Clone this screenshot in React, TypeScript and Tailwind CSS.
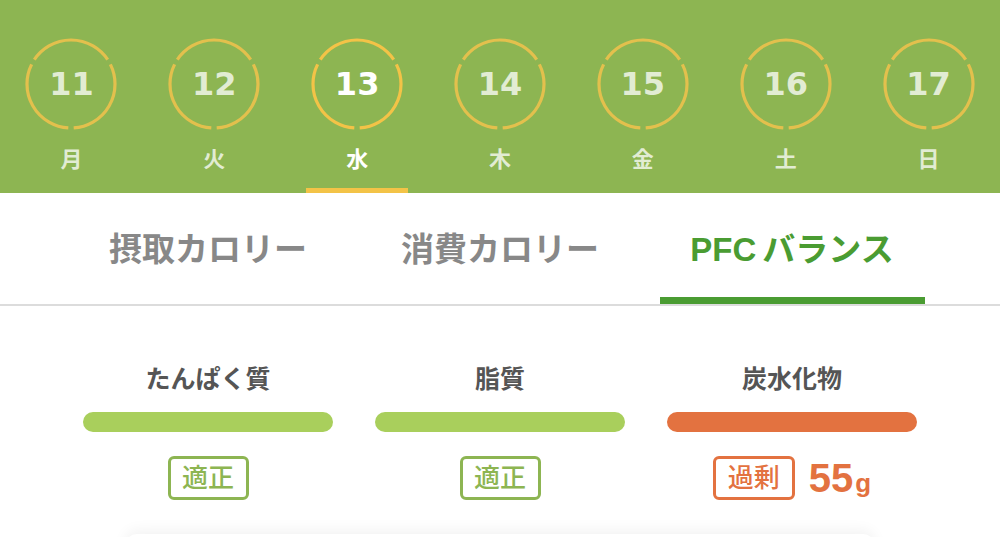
const DAYS = [
  { date: 11, label: "月" },
  { date: 12, label: "火" },
  { date: 13, label: "水", selected: true },
  { date: 14, label: "木" },
  { date: 15, label: "金" },
  { date: 16, label: "土" },
  { date: 17, label: "日" },
];

const TABS = [
  { name: "摂取カロリー" },
  { name: "消費カロリー" },
  { name: "PFCバランス", active: true },
];

const FONT = { fontFamily: '"Liberation Sans", "Noto Sans CJK JP", sans-serif' };

// arc from angle a to b (degrees, clockwise from 12 o'clock)
function arc(a: number, b: number, r = 44, c = 46) {
  const p = (t: number) => {
    const rad = (t * Math.PI) / 180;
    return `${(c + r * Math.sin(rad)).toFixed(2)} ${(c - r * Math.cos(rad)).toFixed(2)}`;
  };
  return `M ${p(a)} A ${r} ${r} 0 0 1 ${p(b)}`;
}

function Ring({ selected }: { selected?: boolean }) {
  const color = selected ? "#f3c347" : "#e3c04d";
  return (
    <svg width="92" height="92" viewBox="0 0 92 92" className="absolute inset-0">
      {[
        [-56.5, 56.5],
        [63.5, 176.5],
        [183.5, 296.5],
      ].map(([a, b]) => (
        <path key={a} d={arc(a, b)} fill="none" stroke={color} strokeWidth="3.2" />
      ))}
    </svg>
  );
}

function DayCell({ date, label, selected }: { date: number; label: string; selected?: boolean }) {
  return (
    <div className="flex flex-col items-center pt-[38px]">
      <div className="relative flex h-[92px] w-[92px] items-center justify-center">
        <Ring selected={selected} />
        <span
          className={
            selected
              ? "font-['DejaVu_Sans'] text-[32px] leading-none font-bold text-white"
              : "font-['DejaVu_Sans'] text-[32px] leading-none font-bold text-white/75"
          }
        >
          {date}
        </span>
      </div>
      <div
        className={
          selected
            ? "mt-4 h-7 text-[22px] leading-7 font-bold text-white"
            : "mt-4 h-7 text-[22px] leading-7 font-bold text-white/75"
        }
      >
        {label}
      </div>
      <div className={selected ? "mt-[14px] h-[5px] w-[102px] bg-[#f3c347]" : "mt-[14px] h-[5px] w-[102px]"} />
    </div>
  );
}

function Nutrient({
  name,
  ok,
  excess,
}: {
  name: string;
  ok?: boolean;
  excess?: string;
}) {
  return (
    <div className="flex flex-col items-center pt-[57px]">
      <div className="h-8 text-[25px] leading-8 font-bold text-[#555555]">{name}</div>
      <div className={ok ? "mt-[17px] h-5 w-[250px] rounded-full bg-[#a9cf5c]" : "mt-[17px] h-5 w-[250px] rounded-full bg-[#e37240]"} />
      <div className="mt-6 flex h-11 items-center gap-[14px]">
        {ok ? (
          <span className="flex h-11 w-[81px] items-center justify-center rounded-md border-[3px] border-[#8db552] text-[26px] font-medium text-[#8db552]">
            適正
          </span>
        ) : (
          <>
            <span className="flex h-11 w-[82px] items-center justify-center rounded-md border-[3px] border-[#e37240] text-[26px] font-medium text-[#e37240]">
              過剰
            </span>
            <span className="flex items-baseline font-bold text-[#e37240]">
              <span className="text-[40px] leading-none">{excess}</span>
              <span className="ml-0.5 text-[26px] leading-none">g</span>
            </span>
          </>
        )}
      </div>
    </div>
  );
}

export default function App() {
  return (
    <div className="h-[537px] w-[1000px] overflow-hidden bg-white" style={FONT}>
      {/* Week strip */}
      <div className="grid h-[193px] grid-cols-7 bg-[#8db552]">
        {DAYS.map((d) => (
          <DayCell key={d.date} {...d} />
        ))}
      </div>

      {/* Tabs */}
      <div className="border-b-2 border-[#dcdcdc]">
        <div className="grid grid-cols-3 px-[62px]">
          {TABS.map((t) => (
            <div key={t.name} className="flex flex-col items-center pt-[37px]">
              <div
                className={
                  t.active
                    ? "h-10 text-[33px] leading-10 font-bold text-[#4a9c32]"
                    : "h-10 text-[33px] leading-10 font-bold text-[#888888]"
                }
              >
                {t.active ? (
                  <>
                    <span className="mr-1.5">PFC</span>バランス
                  </>
                ) : (
                  t.name
                )}
              </div>
              <div className={t.active ? "mt-[27px] h-[7px] w-[265px] bg-[#4a9c32]" : "mt-[27px] h-[7px] w-[265px]"} />
            </div>
          ))}
        </div>
      </div>

      {/* PFC content */}
      <div className="grid grid-cols-3 px-[62px]">
        <Nutrient name="たんぱく質" ok />
        <Nutrient name="脂質" ok />
        <Nutrient name="炭水化物" excess="55" />
      </div>

      {/* next card peeking */}
      <div className="mx-auto mt-[34px] h-10 w-[750px] rounded-xl bg-white shadow-[0_-4px_14px_rgba(0,0,0,0.05)]" />
    </div>
  );
}
